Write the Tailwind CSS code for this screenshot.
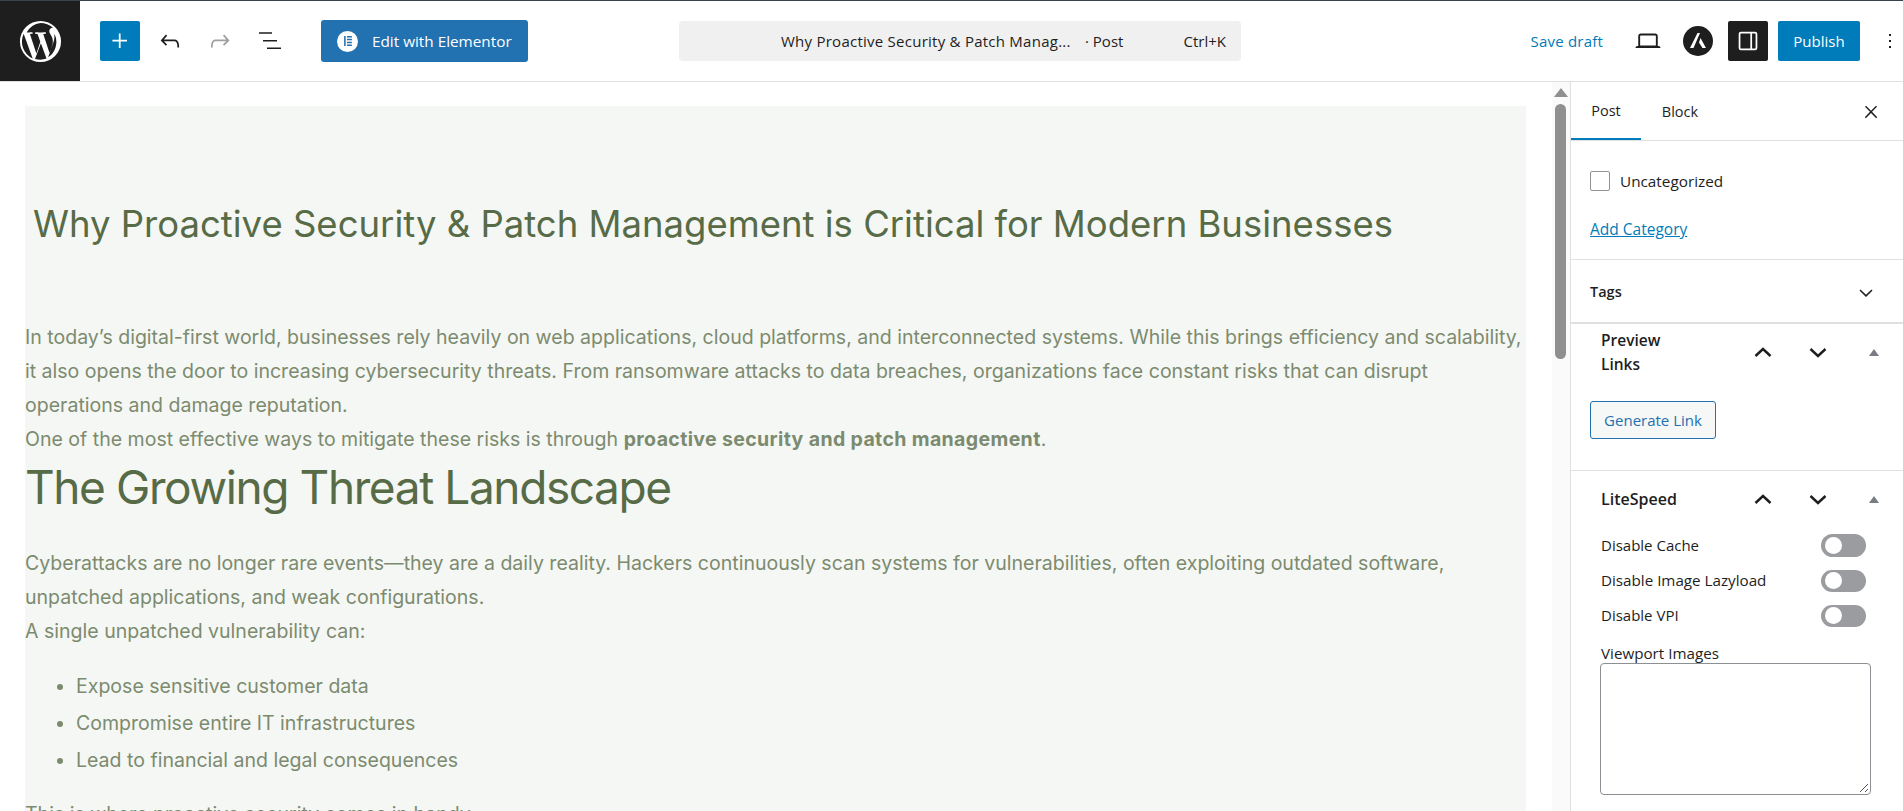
<!DOCTYPE html>
<html lang="en">
<head>
  <meta charset="UTF-8" />
  <title>Edit Post</title>
  <script src="https://cdn.jsdelivr.net/npm/@tailwindcss/browser@4"></script>
</head>
<body class="h-[811px] w-[1903px] overflow-hidden bg-white font-['Open_Sans',sans-serif] text-[#1e1e1e]">

  <!-- admin bar sliver + editor header -->
  <div class="h-px bg-[#3c434a]"></div>
  <header class="flex h-[81px] items-center border-b border-[#e0e0e0] bg-white">
    <a class="flex h-[80px] w-[80px] shrink-0 items-center justify-center bg-[#1e1e1e]">
      <svg class="h-[47px] w-[47px]" viewBox="0 0 24 24" fill="#fff"><path d="M12 1.500a10.500 10.500 0 1 0 0 21 10.500 10.500 0 0 0 0-21zm0 1a9.500 9.500 0 0 1 6.400 2.500c-1-.1-1.900.6-1.900 1.700 0 1 .6 1.700 1.100 2.600.4.7.7 1.500.7 2.700 0 .9-.3 1.800-.7 3.100l-.9 3-3.300-9.900c.6 0 1.100-.1 1.100-.1.5 0 .4-.8-.1-.8 0 0-1.500.1-2.400.1s-2.400-.1-2.400-.1c-.5 0-.6.8-.1.8 0 0 .5.1 1 .1l1.400 3.900-2 6-3.300-9.900c.6 0 1.100-.1 1.100-.1.5 0 .4-.8-.1-.8 0 0-1.500.1-2.400.1H4.900A9.500 9.500 0 0 1 12 2.500zM3.400 8.100l4.600 12.600A9.500 9.500 0 0 1 3.400 8.100zm8.800 4.800 2.800 7.700.1.1a9.500 9.500 0 0 1-5.900.2l3-8zm7-4.700a9.500 9.500 0 0 1-3.300 11.900l2.600-7.500c.5-1.200.6-2.200.6-3 0-.5 0-.9.1-1.400z"/></svg>
    </a>

    <div class="ml-[20px] flex items-center">
      <button class="flex h-[40px] w-[40px] items-center justify-center rounded-[2px] bg-[#007cba]">
        <svg class="h-[28px] w-[28px]" viewBox="0 0 24 24" fill="#fff"><path d="M11 12.500V18h1.500v-5.500H18V11h-5.500V5.500H11V11H5.500v1.500z"/></svg>
      </button>
      <button class="ml-[14px] flex h-[40px] w-[32px] items-center justify-center">
        <svg class="h-[28px] w-[28px]" viewBox="0 0 24 24" fill="#1e1e1e"><path d="M18.300 11.700c-.6-.6-1.400-.9-2.300-.9H6.700l2.900-3.300-1.100-1-4.500 5L8.500 16l1-1-2.700-2.700H16c.5 0 .9.2 1.300.5 1 1 1 3.400 1 4.500v.3h1.500v-.2c0-1.500 0-4.300-1.500-5.700z"/></svg>
      </button>
      <button class="ml-[18px] flex h-[40px] w-[32px] items-center justify-center">
        <svg class="h-[28px] w-[28px]" viewBox="0 0 24 24" fill="#a0a0a0"><path d="M15.600 6.500l-1.100 1 2.900 3.300H8c-.9 0-1.700.3-2.300.9-1.400 1.500-1.400 4.200-1.400 5.600v.2h1.500v-.3c0-1.100 0-3.500 1-4.500.3-.3.7-.5 1.300-.5h9.200L14.500 15l1.100 1.100 4.600-4.600-4.600-5z"/></svg>
      </button>
      <button class="ml-[18px] flex h-[40px] w-[32px] items-center justify-center">
        <svg class="h-6 w-6" viewBox="0 0 24 24" fill="#1e1e1e"><path d="M1 3.200h13v1.500H1zM5 11h14v1.500H5zM9 18.500h14V20H9z"/></svg>
      </button>
      <button class="ml-[35px] flex h-[42px] w-[207px] items-center rounded-[3px] bg-[#2271b1] pl-[16px] text-[15.300px] text-white">
        <span class="flex h-[21px] w-[21px] items-center justify-center rounded-full bg-white">
          <svg class="h-[10px] w-[10px]" viewBox="0 0 9 9" fill="#2271b1"><path d="M1 0h1.400v9H1zM3.600 0H8v1.400H3.600zM3.600 2.500H8v1.400H3.600zM3.600 5.100H8v1.400H3.600zM3.600 7.600H8V9H3.600z"/></svg>
        </span>
        <span class="ml-[14px] whitespace-nowrap">Edit with Elementor</span>
      </button>
    </div>

    <div class="ml-[151px] flex h-[40px] w-[562px] items-center rounded-[4px] bg-[#f0f0f0] text-[15px]">
      <span class="ml-[102px] w-[304px] shrink-0 whitespace-nowrap tracking-[0.25px]">Why Proactive Security &amp; Patch Manag...</span>
      <span class="whitespace-nowrap">· Post</span>
      <span class="ml-auto mr-[15px]">Ctrl+K</span>
    </div>

    <div class="ml-auto flex items-center">
      <a class="text-[15px] tracking-[0.2px] text-[#007cba]">Save draft</a>
      <svg class="ml-[30px] h-[30px] w-[30px]" viewBox="0 0 24 24" fill="#1e1e1e"><path d="M20.500 16h-.7V8c0-1.100-.9-2-2-2H6.200c-1.100 0-2 .9-2 2v8h-.7c-.8 0-1.500.7-1.500 1.500h20c0-.8-.7-1.500-1.500-1.500zM5.700 8c0-.3.2-.5.5-.5h11.600c.3 0 .5.2.5.5v7.600H5.700V8z"/></svg>
      <svg class="ml-[20px] h-[30px] w-[30px]" viewBox="0 0 30 30"><circle cx="15" cy="15" r="15" fill="#1e1e1e"/><path d="M14.500 7H17L10.500 22H7zM17.500 12 23 22h-3.500L16 16.500z" fill="#fff"/></svg>
      <button class="ml-[15px] flex h-[40px] w-[40px] items-center justify-center rounded-[2px] bg-[#1e1e1e]">
        <svg class="h-[28px] w-[28px]" viewBox="0 0 24 24" fill="#fff"><path d="M18 4H6a2 2 0 0 0-2 2v12a2 2 0 0 0 2 2h12a2 2 0 0 0 2-2V6a2 2 0 0 0-2-2zM5.500 18V6c0-.3.2-.5.5-.5h8v13H6a.5.5 0 0 1-.5-.5zm13 0c0 .3-.2.5-.5.5h-2.500v-13H18c.3 0 .5.2.5.5v12z"/></svg>
      </button>
      <button class="ml-[10px] h-[40px] w-[82px] rounded-[2px] bg-[#007cba] text-[15px] text-white">Publish</button>
      <button class="ml-[18px] mr-px flex h-[40px] w-[24px] items-center justify-center">
        <svg class="h-6 w-6" viewBox="0 0 24 24" fill="#1e1e1e"><path d="M13 19h-2v-2h2v2zm0-6h-2v-2h2v2zm0-6h-2V5h2v2z"/></svg>
      </button>
    </div>
  </header>

  <div class="flex h-[729px]">
    <!-- post canvas -->
    <main class="relative w-[1570px] shrink-0 overflow-hidden bg-white">
      <div class="ml-[25px] mt-[24px] h-[720px] w-[1501px] whitespace-nowrap bg-[#f5f7f4] font-['Inter',sans-serif] text-[19.550px] leading-[34px] text-[#7c8b6f]">
        <h1 class="pl-[8px] pt-[93px] text-[36.500px] leading-[50px] text-[#576b47]">Why Proactive Security &amp; Patch Management is Critical for Modern Businesses</h1>
        <div class="mt-[71px]">
          <p>In today’s digital-first world, businesses rely heavily on web applications, cloud platforms, and interconnected systems. While this brings efficiency and scalability,<br>it also opens the door to increasing cybersecurity threats. From ransomware attacks to data breaches, organizations face constant risks that can disrupt<br>operations and damage reputation.<br>One of the most effective ways to mitigate these risks is through <strong class="font-bold tracking-[0.35px]">proactive security and patch management</strong>.</p>
          <h2 class="text-[46px] leading-[62px] tracking-[-1.400px] text-[#576b47]">The Growing Threat Landscape</h2>
          <p class="mt-[28px]">Cyberattacks are no longer rare events—they are a daily reality. Hackers continuously scan systems for vulnerabilities, often exploiting outdated software,<br>unpatched applications, and weak configurations.<br>A single unpatched vulnerability can:</p>
          <ul class="mt-[21px] list-disc pl-[51px] marker:text-[#7c8b6f]">
            <li class="mb-[3px]">Expose sensitive customer data</li>
            <li class="mb-[3px]">Compromise entire IT infrastructures</li>
            <li>Lead to financial and legal consequences</li>
          </ul>
          <p class="mt-[20px]">This is where proactive security comes in handy</p>
        </div>
      </div>

      <!-- scrollbar -->
      <div class="absolute right-0 top-0 h-full w-[18px] bg-[#fafafa]">
        <div class="ml-[2px] mt-[6px] h-0 w-0 border-x-[7px] border-b-[9px] border-x-transparent border-b-[#8f8f8f]"></div>
        <div class="ml-[3px] mt-[7px] h-[255px] w-[11px] rounded-full bg-[#8f8f8f]"></div>
      </div>
    </main>

    <!-- settings sidebar -->
    <aside class="w-[333px] shrink-0 overflow-hidden border-l border-[#e0e0e0] bg-white text-[15px]">
      <div class="flex h-[59px] items-center border-b border-[#e0e0e0] pt-px">
        <div class="flex h-full w-[70px] items-center justify-center border-b-2 border-[#007cba] text-[14.500px]">Post</div>
        <div class="flex h-full w-[78px] items-center justify-center text-[14.500px]">Block</div>
        <svg class="ml-auto mr-[20px] h-6 w-6" viewBox="0 0 24 24" fill="#1e1e1e"><path d="M13 11.800l5-5.100-1-1-5 5.100-5-5.100-1 1 5 5.100-5.200 5.400 1 1 5.200-5.300 5.200 5.300 1-1z"/></svg>
      </div>

      <div class="h-[119px] border-b border-[#e0e0e0] px-[19px] pt-[30px]">
        <div class="flex items-center">
          <span class="h-[20px] w-[20px] rounded-[2px] border border-[#949494]"></span>
          <span class="ml-[10px] text-[15.300px] leading-[20px]">Uncategorized</span>
        </div>
        <a class="mt-[28px] block text-[15.500px] leading-[20px] text-[#007cba] underline">Add Category</a>
      </div>

      <div class="flex h-[64px] items-center justify-between border-b-2 border-[#e0e0e0] pl-[19px] pr-[25px] pt-[2px] text-[14.500px] font-semibold">
        <span>Tags</span>
        <svg class="h-6 w-6" viewBox="0 0 24 24" fill="#1e1e1e"><path d="M17.500 9.500 12 14.800 6.500 9.500l-1 1.100L12 17l6.500-6.400z"/></svg>
      </div>

      <div class="h-[147px] border-b border-[#e0e0e0] pl-[19px] pt-[4px]">
        <div class="flex h-[48px] items-center">
          <h3 class="ml-[11px] w-[80px] text-[15.500px] font-semibold leading-[24px]">Preview Links</h3>
          <svg class="ml-[70px] h-6 w-6" viewBox="0 0 24 24" fill="none" stroke="#1e1e1e" stroke-width="2.400"><path d="M4.500 16 12 9l7.500 7"/></svg>
          <svg class="ml-[31px] h-6 w-6" viewBox="0 0 24 24" fill="none" stroke="#1e1e1e" stroke-width="2.400"><path d="M4.500 9 12 16l7.500-7"/></svg>
          <span class="ml-[39px] h-0 w-0 border-x-[5px] border-b-[7px] border-x-transparent border-b-[#787c82]"></span>
        </div>
        <button class="mt-[25px] h-[38px] w-[126px] rounded-[3px] border border-[#2271b1] bg-[#f6f7f7] text-[15px] text-[#2271b1]">Generate Link</button>
      </div>

      <div class="pl-[30px]">
        <div class="flex h-[56px] items-center">
          <h3 class="w-[80px] text-[16px] font-semibold">LiteSpeed</h3>
          <svg class="ml-[70px] h-6 w-6" viewBox="0 0 24 24" fill="none" stroke="#1e1e1e" stroke-width="2.400"><path d="M4.500 16 12 9l7.500 7"/></svg>
          <svg class="ml-[31px] h-6 w-6" viewBox="0 0 24 24" fill="none" stroke="#1e1e1e" stroke-width="2.400"><path d="M4.500 9 12 16l7.500-7"/></svg>
          <span class="ml-[39px] h-0 w-0 border-x-[5px] border-b-[7px] border-x-transparent border-b-[#787c82]"></span>
        </div>
        <div class="flex h-[36px] w-[265px] items-center justify-between">
          <span>Disable Cache</span>
          <span class="flex h-[23px] w-[45px] items-center rounded-full bg-[#9a9ca0] pl-[4px]"><i class="h-[17px] w-[17px] rounded-full bg-white"></i></span>
        </div>
        <div class="flex h-[35px] w-[265px] items-center justify-between">
          <span class="text-[15.200px]">Disable Image Lazyload</span>
          <span class="flex h-[22px] w-[45px] items-center rounded-full bg-[#9a9ca0] pl-[4px]"><i class="h-[17px] w-[17px] rounded-full bg-white"></i></span>
        </div>
        <div class="flex h-[35px] w-[265px] items-center justify-between">
          <span>Disable VPI</span>
          <span class="flex h-[22px] w-[45px] items-center rounded-full bg-[#9a9ca0] pl-[4px]"><i class="h-[17px] w-[17px] rounded-full bg-white"></i></span>
        </div>
        <label class="mt-[11px] block text-[15.200px] leading-[18px]">Viewport Images</label>
        <div class="relative -ml-px mt-px h-[132px] w-[271px] rounded-[4px] border border-[#8c8f94] bg-white">
          <svg class="absolute bottom-[1px] right-[1px] h-[10px] w-[10px]" viewBox="0 0 10 10" stroke="#555" fill="none"><path d="M1 9 9 1M6 9l3-3"/></svg>
        </div>
      </div>
    </aside>
  </div>

</body>
</html>
